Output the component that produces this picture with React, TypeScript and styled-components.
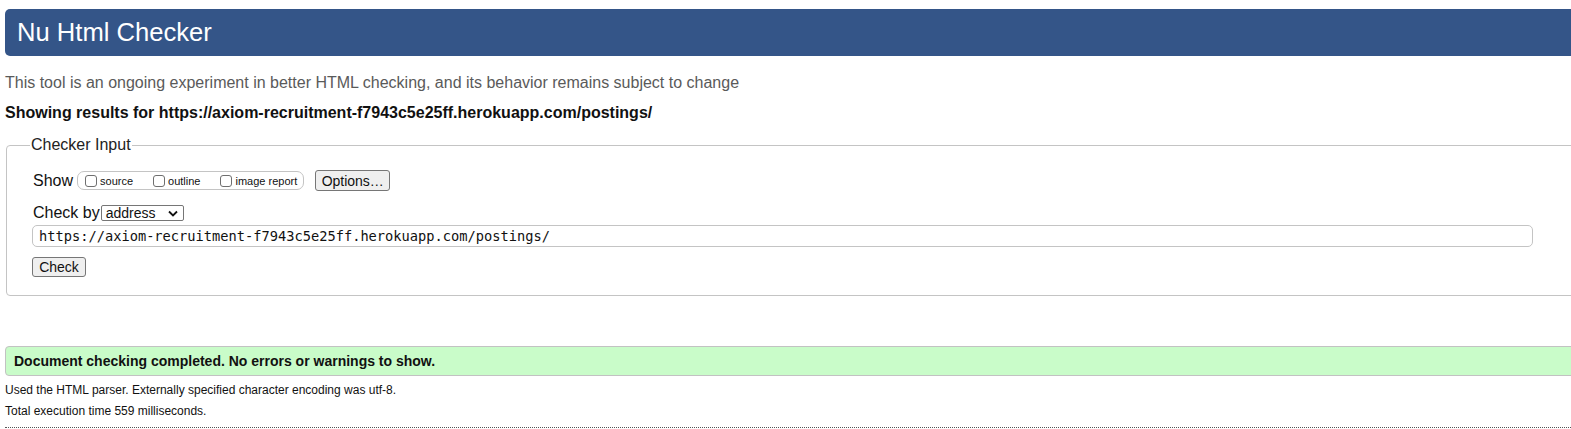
import React from "react";
import styled, { createGlobalStyle } from "styled-components";

const Global = createGlobalStyle`
  html, body { margin: 0; padding: 0; background: #fff; overflow: hidden; }
  body { font-family: "Liberation Sans", Arial, Helvetica, sans-serif; color: #111; }
`;

const Page = styled.div`
  width: 1640px;
  padding-left: 5px;
  display: flex;
  flex-direction: column;
`;

const Header = styled.h1`
  margin: 9px 0 0 0;
  height: 47px;
  line-height: 47px;
  padding-left: 12px;
  background: #345588;
  color: #fff;
  font-size: 25.6px;
  font-weight: normal;
  border-radius: 5px 0 0 5px;
`;

const Tagline = styled.p`
  margin: 17px 0 0 0;
  line-height: 20px;
  font-size: 16px;
  color: #5a5a5a;
`;

const Showing = styled.p`
  margin: 10px 0 0 0;
  line-height: 20px;
  font-size: 16px;
  font-weight: bold;
  color: #111;
`;

const Fieldset = styled.fieldset`
  margin: 13px 0 0 1px;
  padding: 8px 26px 18px 26px;
  border: 1px solid #c4c4c4;
  border-radius: 4px;
  display: flex;
  flex-direction: column;
`;

const Legend = styled.legend`
  font-size: 16px;
  line-height: 18px;
  padding: 0 1px;
  margin-left: -3px;
  color: #222;
`;

const Row = styled.div<{ $mt: number }>`
  display: flex;
  align-items: center;
  margin-top: ${(p) => p.$mt}px;
  font-size: 16px;
  color: #111;
`;

const Label = styled.span<{ $gap?: number }>`
  margin-right: ${(p) => p.$gap ?? 4}px;
`;

const Pill = styled.span`
  display: inline-flex;
  align-items: center;
  height: 17px;
  padding: 0 6px 0 7px;
  border: 1px solid #c4c4c4;
  border-radius: 7px;
  gap: 20px;
  margin-right: 11px;
`;

const CheckLabel = styled.label`
  display: inline-flex;
  align-items: center;
  font-size: 11px;
  color: #111;
`;

const Box = styled.input`
  appearance: none;
  box-sizing: border-box;
  width: 12px;
  height: 12px;
  margin: 0 3px 0 0;
  border: 1px solid #6f6f6f;
  border-radius: 3px;
  background: #fff;
`;

const Button = styled.button<{ $w: number; $h: number; $ml?: number }>`
  width: ${(p) => p.$w}px;
  height: ${(p) => p.$h}px;
  margin-left: ${(p) => p.$ml ?? 0}px;
  padding: 0;
  font-family: "Liberation Sans", Arial, sans-serif;
  font-size: 14px;
  color: #111;
  background: #efefef;
  border: 1px solid #767676;
  border-radius: 3px;
`;

const SelectWrap = styled.span`
  display: inline-flex;
  align-items: center;
  width: 83px;
  height: 16px;
  box-sizing: border-box;
  border: 1px solid #767676;
  border-radius: 2px;
  padding: 0 5px 0 4px;
  justify-content: space-between;
  font-size: 14px;
  margin-left: 1px;
`;

const SelectText = styled.span`
  line-height: 14px;
`;

const UrlInput = styled.div`
  margin-top: 3px;
  margin-left: -1px;
  width: 1501px;
  height: 22px;
  box-sizing: border-box;
  border: 1px solid #c4c4c4;
  border-radius: 5px;
  padding-left: 6px;
  display: flex;
  align-items: center;
  font-family: "DejaVu Sans Mono", "Liberation Mono", monospace;
  font-size: 13.7px;
  color: #111;
`;

const Success = styled.div`
  margin-top: 50px;
  height: 30px;
  box-sizing: border-box;
  background: #c9fcc9;
  border: 1px solid #c2c2c2;
  border-radius: 4px 0 0 4px;
  display: flex;
  align-items: center;
  padding-left: 8px;
  font-size: 14px;
  font-weight: bold;
  color: #111;
`;

const Note = styled.p<{ $mt: number }>`
  margin: ${(p) => p.$mt}px 0 0 0;
  font-size: 12px;
  line-height: 14px;
  color: #111;
`;

const Dotted = styled.hr`
  margin: 9px 0 0 0;
  border: 0;
  border-top: 1px dotted #555;
  height: 0;
`;

export default function App() {
  return (
    <>
      <Global />
      <Page>
        <Header>Nu Html Checker</Header>
        <Tagline>
          This tool is an ongoing experiment in better HTML checking, and its behavior remains subject to change
        </Tagline>
        <Showing>Showing results for https://axiom-recruitment-f7943c5e25ff.herokuapp.com/postings/</Showing>
        <Fieldset>
          <Legend>Checker Input</Legend>
          <Row $mt={8}>
            <Label>Show</Label>
            <Pill>
              <CheckLabel>
                <Box type="checkbox" />
                source
              </CheckLabel>
              <CheckLabel>
                <Box type="checkbox" />
                outline
              </CheckLabel>
              <CheckLabel>
                <Box type="checkbox" />
                image report
              </CheckLabel>
            </Pill>
            <Button $w={75} $h={21}>Options…</Button>
          </Row>
          <Row $mt={13}>
            <Label $gap={0}>Check by</Label>
            <SelectWrap>
              <SelectText>address</SelectText>
              <svg width="10" height="7" viewBox="0 0 10 7">
                <path d="M1 1.5 L5 5.5 L9 1.5" fill="none" stroke="#111" strokeWidth="1.8" />
              </svg>
            </SelectWrap>
          </Row>
          <UrlInput>https://axiom-recruitment-f7943c5e25ff.herokuapp.com/postings/</UrlInput>
          <Row $mt={10}>
            <Button $w={54} $h={20} $ml={-1}>Check</Button>
          </Row>
        </Fieldset>
        <Success>Document checking completed. No errors or warnings to show.</Success>
        <Note $mt={7}>Used the HTML parser. Externally specified character encoding was utf-8.</Note>
        <Note $mt={7}>Total execution time 559 milliseconds.</Note>
        <Dotted />
      </Page>
    </>
  );
}
